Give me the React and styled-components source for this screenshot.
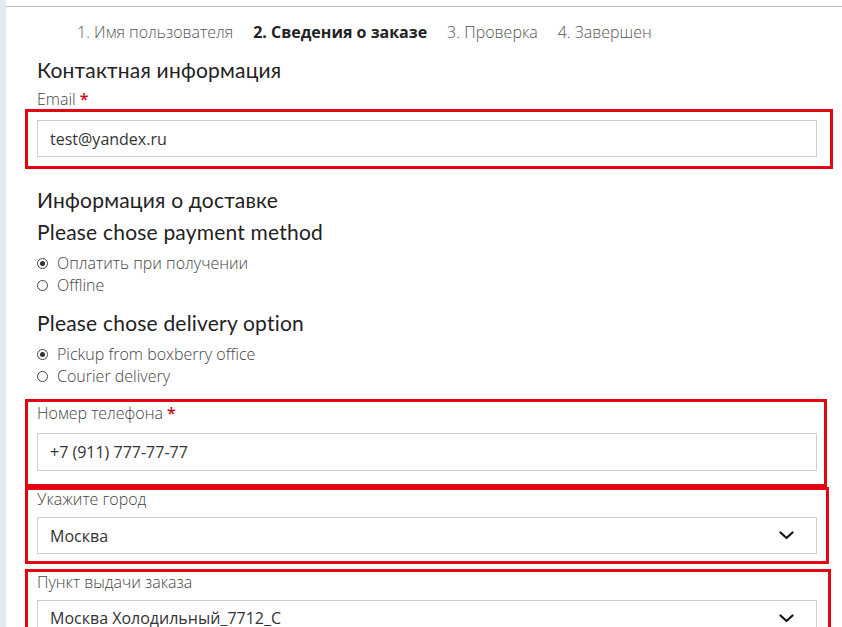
import React from 'react';
import styled, { createGlobalStyle } from 'styled-components';

const GlobalStyle = createGlobalStyle`
  body {
    margin: 0;
    background: #fff;
    font-family: "Open Sans", "Liberation Sans", sans-serif;
  }
`;

const Page = styled.div`
  display: flex;
  min-height: 627px;
  overflow: hidden;
`;

const SideStrip = styled.div`
  width: 6px;
  flex-shrink: 0;
  background: #e2eaf3;
`;

const Main = styled.div`
  flex: 1;
  padding-top: 6px;
`;

const TopRule = styled.div`
  border-top: 1px solid #bfbfbf;
`;

const Content = styled.div`
  padding: 0 25px 0 31px;
  display: flex;
  flex-direction: column;
`;

const Steps = styled.ol`
  list-style: none;
  margin: 0;
  padding: 15px 0 0 40px;
  display: flex;
  gap: 20px;
`;

const Step = styled.li`
  font-size: 16px;
  line-height: 20px;
  font-weight: ${(p) => (p.$active ? 700 : 300)};
  color: ${(p) => (p.$active ? '#222' : '#555')};
`;

const Heading = styled.h3`
  margin: ${(p) => p.$top}px 0 0;
  font-family: "Lato", "DejaVu Sans", sans-serif;
  font-weight: 400;
  font-size: 21px;
  letter-spacing: 0.2px;
  line-height: 26px;
  color: #222;
`;

const Label = styled.label`
  display: block;
  margin-top: ${(p) => p.$top || 0}px;
  font-size: 16px;
  line-height: ${(p) => p.$lh || 20}px;
  font-weight: 300;
  color: #444;

  span {
    color: #d0021b;
    font-weight: 600;
  }
`;

const Highlight = styled.div`
  margin: ${(p) => p.$top}px -${(p) => p.$right}px 0 -12px;
  padding: ${(p) => p.$pad};
  border: 3px solid #e30613;
`;

const InputBox = styled.div`
  margin-top: ${(p) => p.$top || 0}px;
  height: ${(p) => p.$h || 38}px;
  box-sizing: border-box;
  border: 1px solid #d0d0d0;
  display: flex;
  align-items: center;
  justify-content: space-between;
  padding: 0 22px 0 12px;
  font-size: 16px;
  color: #333;
`;

const RadioGroup = styled.div`
  margin-top: 7px;
  display: flex;
  flex-direction: column;
`;

const RadioRow = styled.div`
  display: flex;
  align-items: center;
  gap: 9px;
  font-size: 16px;
  line-height: 22px;
  font-weight: 300;
  color: #444;
`;

const RadioMark = styled.span`
  width: 11px;
  height: 11px;
  box-sizing: border-box;
  border: 1px solid #444;
  border-radius: 50%;
  display: flex;
  align-items: center;
  justify-content: center;

  &::after {
    content: '';
    width: 5px;
    height: 5px;
    border-radius: 50%;
    background: ${(p) => (p.$checked ? '#333' : 'transparent')};
  }
`;

const Chevron = () => (
  <svg width="15" height="9" viewBox="0 0 15 9" fill="none">
    <polyline points="1.5,1.5 7.5,7 13.5,1.5" stroke="#111" strokeWidth="2.2" strokeLinecap="round" strokeLinejoin="round" />
  </svg>
);

const Radio = ({ checked, children }) => (
  <RadioRow>
    <RadioMark $checked={checked} />
    {children}
  </RadioRow>
);

const App = () => (
  <>
    <GlobalStyle />
    <Page>
      <SideStrip />
      <Main>
        <TopRule />
        <Content>
          <Steps>
            <Step>1. Имя пользователя</Step>
            <Step $active>2. Сведения о заказе</Step>
            <Step>3. Проверка</Step>
            <Step>4. Завершен</Step>
          </Steps>

          <Heading $top={15}>Контактная информация</Heading>
          <Label $top={7} $lh={19}>Email <span>*</span></Label>
          <Highlight $top={0} $right={16} $pad="8px 13px 9px 9px">
            <InputBox $h={37}>test@yandex.ru</InputBox>
          </Highlight>

          <Heading $top={18}>Информация о доставке</Heading>
          <Heading $top={6}>Please chose payment method</Heading>
          <RadioGroup>
            <Radio checked>Оплатить при получении</Radio>
            <Radio>Offline</Radio>
          </RadioGroup>

          <Heading $top={14}>Please chose delivery option</Heading>
          <RadioGroup>
            <Radio checked>Pickup from boxberry office</Radio>
            <Radio>Courier delivery</Radio>
          </RadioGroup>

          <Highlight $top={12} $right={10} $pad="1px 7px 13px 9px">
            <Label>Номер телефона <span>*</span></Label>
            <InputBox $top={10}>+7 (911) 777-77-77</InputBox>
          </Highlight>
          <Highlight $top={0} $right={12} $pad="0 9px 7px 9px">
            <Label $lh={18}>Укажите город</Label>
            <InputBox $top={9} $h={37}>
              Москва
              <Chevron />
            </InputBox>
          </Highlight>
          <Highlight $top={5} $right={14} $pad="1px 11px 12px 9px">
            <Label $lh={18}>Пункт выдачи заказа</Label>
            <InputBox $top={9} $h={36}>
              Москва Холодильный_7712_С
              <Chevron />
            </InputBox>
          </Highlight>
        </Content>
      </Main>
    </Page>
  </>
);

export default App;
